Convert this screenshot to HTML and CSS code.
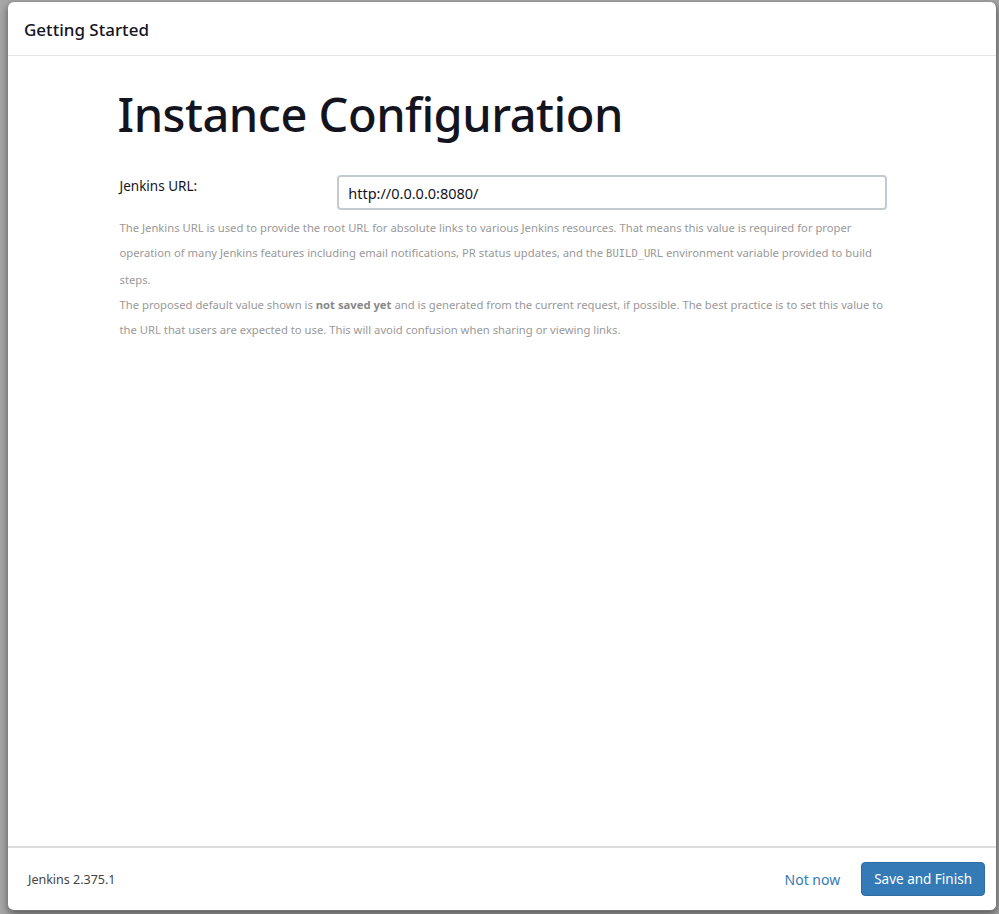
FILE: index.html
```html
<!DOCTYPE html>
<html lang="en">
<head>
    <meta charset="UTF-8">
    <title>Setup Wizard [Jenkins]</title>
    <link rel="stylesheet" href="styles.css">
</head>
<body>
    <div class="modal">
        <div class="modal-header">
            <h4 class="modal-title">Getting Started</h4>
        </div>

        <div class="modal-body">
            <div class="jumbotron">
                <h1>Instance Configuration</h1>

                <div class="form-row">
                    <label class="control-label" for="root-url">Jenkins URL:</label>
                    <input type="text" class="form-control" id="root-url" value="http://0.0.0.0:8080/">
                </div>

                <div class="help-block">
                    <p>The Jenkins URL is used to provide the root URL for absolute links to various Jenkins resources. That means this value is required for proper operation of many Jenkins features including email notifications, PR status updates, and the <code>BUILD_URL</code> environment variable provided to build steps.</p>
                    <p>The proposed default value shown is <strong>not saved yet</strong> and is generated from the current request, if possible. The best practice is to set this value to the URL that users are expected to use. This will avoid confusion when sharing or viewing links.</p>
                </div>
            </div>
        </div>

        <div class="modal-footer">
            <div class="version">Jenkins 2.375.1</div>
            <div class="actions">
                <a href="#" class="btn btn-link">Not now</a>
                <button type="button" class="btn btn-primary">Save and Finish</button>
            </div>
        </div>
    </div>
</body>
</html>
```

FILE: styles.css
```css
body {
    margin: 0;
    padding: 2px 2px 4px 8px;
    height: 914px;
    box-sizing: border-box;
    background: #a7a7a7;
    font-family: "Noto Sans", "Open Sans", sans-serif;
    color: #333;
    overflow: hidden;
}

.modal {
    display: flex;
    flex-direction: column;
    height: 100%;
    background: white;
    border-radius: 6px;
    box-shadow: 0 3px 9px rgba(0, 0, 0, 0.5);
    border-right: 1px solid #777;
    border-bottom: 1px solid #777;
}

/* header */
.modal-header {
    padding: 16px 16px 0;
    height: 54px;
    box-sizing: border-box;
    border-bottom: 1px solid #e5e5e5;
}

.modal-title {
    margin: 0;
    font-size: 17px;
    font-weight: 500;
    line-height: 24px;
    color: #14141f;
}

/* body */
.modal-body {
    flex: 1;
}

.jumbotron {
    width: 769px;
    margin: 0 auto;
}

h1 {
    margin: 28px 0 31px;
    font-size: 47px;
    font-weight: 500;
    line-height: 60px;
    color: #14141f;
    letter-spacing: -0.5px;
}

.form-row {
    display: flex;
    align-items: flex-start;
}

.control-label {
    width: 220px;
    padding: 2px 0 0 2px;
    font-size: 13.5px;
    color: #14141f;
    box-sizing: border-box;
}

.form-control {
    width: 550px;
    height: 35px;
    padding: 0 9px;
    box-sizing: border-box;
    border: 2px solid #c3cbd0;
    border-radius: 4px;
    font-family: inherit;
    font-size: 14.5px;
    color: #14141f;
}

.help-block {
    margin-top: 5px;
    padding-left: 2px;
    font-size: 11.25px;
    line-height: 25.3px;
    color: #999;
}

.help-block p {
    margin: 0;
}

.help-block code {
    font-family: "DejaVu Sans Mono", monospace;
    font-size: 10.5px;
}

.help-block strong {
    color: #888;
}

/* footer */
.modal-footer {
    display: flex;
    align-items: center;
    justify-content: space-between;
    height: 62px;
    padding: 0 11px 0 20px;
    border-top: 2px solid #ddd;
}

.version {
    font-size: 12.5px;
    color: #444;
}

.actions {
    display: flex;
    align-items: center;
    gap: 21px;
}

.btn {
    font-family: inherit;
    font-size: 14px;
    text-decoration: none;
    cursor: pointer;
}

.btn-link {
    color: #337ab7;
}

.btn-primary {
    height: 34px;
    padding: 0 12px;
    background: #337ab7;
    color: white;
    border: 1px solid #2e6da4;
    border-radius: 4px;
    font-size: 13.5px;
}
```
